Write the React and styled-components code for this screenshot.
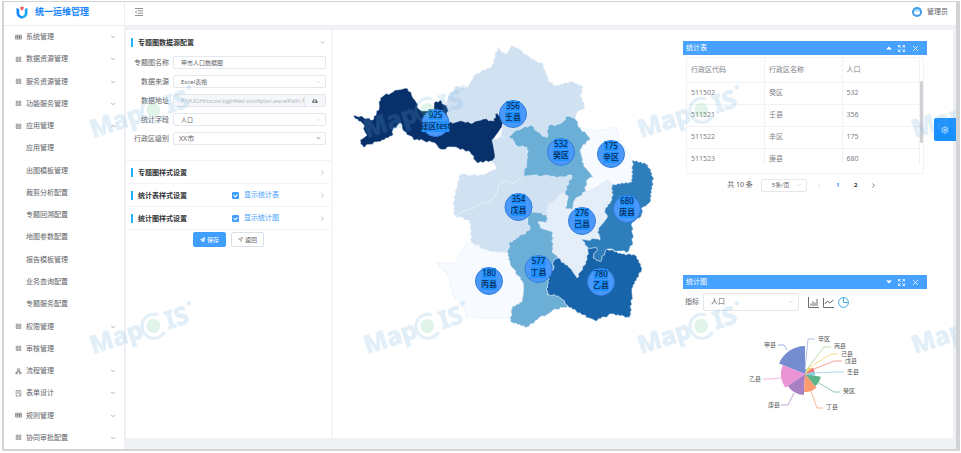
import React from "react";
import styled, { createGlobalStyle, css } from "styled-components";
import { ChevronDown, ChevronUp, ChevronRight, ChevronLeft, X, Send, Settings } from "lucide-react";
import { FaCloudUploadAlt, FaPaperPlane } from "react-icons/fa";

const GlobalStyle = createGlobalStyle`
  *, *::before, *::after { box-sizing: border-box; }
  body {
    margin: 0;
    background: #fff;
    color: #606266;
    font: 7px/10px "Noto Sans", "Noto Sans CJK SC", sans-serif;
  }
  button, input, select { font: inherit; color: inherit; margin: 0; }
  svg { display: block; flex: none; }
`;

const Frame = styled.div`
  position: relative;
  display: grid;
  grid-template-columns: 121px minmax(0, 1fr);
  min-height: calc(100vh - 3px);
  margin: 1px 1px 2px 2px;
  border: 1px solid #d4d4d4;
  border-left-width: 2px;
  border-right: 4px solid #d2d3d5;
  border-bottom-width: 2px;
  overflow: hidden;
`;

const Sidebar = styled.aside`
  display: flex;
  flex-direction: column;
  background: #fff;
  border-right: 1px solid #eceef2;
`;

const Brand = styled.div`
  display: flex;
  align-items: center;
  gap: 7px;
  height: 24px;
  padding: 0 12px 3px;
  border-bottom: 1px solid #eceef2;
  color: #1684fc;
  font-size: 9px;
  font-weight: 700;
`;

const Nav = styled.nav`
  flex: 1;
  display: grid;
  grid-auto-rows: 1fr;
`;

const NavItem = styled.button`
  display: flex;
  align-items: center;
  gap: 4px;
  min-height: 16px;
  padding: 0 8px 0 ${(p) => (p.$child ? 22 : 11)}px;
  border: 0;
  background: none;
  text-align: left;
  cursor: pointer;
  span { flex: 1; }
`;

const Page = styled.div`
  display: flex;
  flex-direction: column;
  min-width: 0;
  background: #eff1f5;
`;

const TopBar = styled.header`
  display: flex;
  align-items: center;
  justify-content: space-between;
  height: 23px;
  padding: 0 8px 4px 10px;
  background: #fff;
`;

const IconButton = styled.button`
  display: flex;
  padding: 0;
  border: 0;
  background: none;
  color: ${(p) => p.$color || "inherit"};
  cursor: pointer;
`;

const User = styled.div`
  display: flex;
  align-items: center;
  gap: 5px;
`;

const Workspace = styled.main`
  flex: 1;
  display: grid;
  grid-template-columns: 207px minmax(310px, 1fr) 270px;
  margin: 5px 3px 11px 1px;
  background: #fff;
`;

const Config = styled.form`
  border-right: 2px solid #f5f6f8;
`;

const Section = styled.section`
  display: flex;
  align-items: center;
  height: ${(p) => (p.$open ? 24 : 23)}px;
  margin: 0 2px 0 1px;
  padding: 0 3px 0 4px;
  border-bottom: ${(p) => (p.$open ? 0 : 1)}px solid #f1f2f5;
  color: #909399;
`;

const SectionTitle = styled.h2`
  flex: 1;
  margin: 0;
  padding-left: 5px;
  border-left: 2px solid #22b1fb;
  color: #303133;
  font-size: 7px;
  font-weight: 700;
  line-height: 9px;
`;

const CheckLabel = styled.label`
  display: flex;
  align-items: center;
  gap: 5px;
  width: 87px;
  color: #409eff;
`;

const Check = styled.input`
  appearance: none;
  position: relative;
  width: 7px;
  height: 7px;
  border: 1px solid #409eff;
  border-radius: 1px;
  background: #fff;
  &:checked { background: #409eff; }
  &:checked::after {
    content: "";
    position: absolute;
    left: 1px;
    top: 0;
    width: 3px;
    height: 4px;
    border: solid #fff;
    border-width: 0 1px 1px 0;
    transform: rotate(45deg);
  }
`;

const Fields = styled.div`
  display: grid;
  gap: 6px;
  padding: 2px 5px 15px;
  border-bottom: 1px solid #f1f2f5;
`;

const Field = styled.div`
  display: grid;
  grid-template-columns: 38px minmax(0, 1fr);
  align-items: center;
  gap: 4px;
  height: 13px;
`;

const FieldLabel = styled.label`
  text-align: right;
  white-space: nowrap;
`;

const control = css`
  width: 100%;
  min-width: 0;
  height: ${(p) => p.$height || 13}px;
  padding: 0 7px;
  border: 1px solid #e4e7ed;
  border-radius: 2px;
  background: #fff;
  font-size: ${(p) => p.$size || 6}px;
  line-height: 10px;
  outline: 0;
`;

const TextInput = styled.input`
  ${control}
`;

const SelectBox = styled.div`
  position: relative;
  width: ${(p) => p.$width || "100%"};
  svg {
    position: absolute;
    right: 5px;
    top: calc(50% - 3px);
    color: #c0c4cc;
    pointer-events: none;
  }
`;

const SelectInput = styled.select`
  ${control}
  appearance: none;
  padding-left: ${(p) => p.$indent || 7}px;
`;

const Upload = styled.div`
  display: flex;
  height: 13px;
  border: 1px solid #e4e7ed;
  border-radius: 2px;
  background: #f5f7fa;
`;

const PathInput = styled.input`
  flex: 1;
  min-width: 0;
  padding: 0 0 0 7px;
  border: 0;
  background: none;
  color: #b4b8c0;
  font-family: Lato, "Noto Sans CJK SC", sans-serif;
  font-size: 6px;
`;

const UploadButton = styled.button`
  display: grid;
  place-items: center;
  width: 21px;
  padding: 0;
  border: 0;
  border-left: 1px solid #e4e7ed;
  background: none;
  color: #777a80;
`;

const Actions = styled.div`
  display: flex;
  justify-content: center;
  gap: 5px;
  padding: 2px 0 0;
`;

const Button = styled.button`
  display: flex;
  align-items: center;
  justify-content: center;
  gap: 2px;
  width: 33px;
  height: 15px;
  padding: 0;
  border: 1px solid ${(p) => (p.$primary ? "#409eff" : "#dcdfe6")};
  border-radius: 2px;
  background: ${(p) => (p.$primary ? "#409eff" : "#fff")};
  color: ${(p) => (p.$primary ? "#fff" : "#606266")};
  font-size: 6px;
`;

const MapArea = styled.section`
  display: flex;
  justify-content: center;
  align-items: flex-start;
  padding: 10px 0 0;
`;

const Dock = styled.aside`
  display: flex;
  flex-direction: column;
  justify-content: space-between;
  padding: 11px 26px 12px 0;
`;

const PanelBar = styled.header`
  display: flex;
  align-items: center;
  gap: 6px;
  height: 14px;
  padding: 0 7px 0 3px;
  background: #46a1ff;
  color: #fff;
  h2 { flex: 1; margin: 0; font-size: 7px; font-weight: 400; }
`;

const TableFrame = styled.div`
  position: relative;
  height: 117px;
  margin: 2px 3px 0;
  padding-bottom: 9px;
  border: 1px solid #f0f2f6;
`;

const TableClip = styled.div`
  height: 106px;
  overflow: hidden;
`;

const Thumb = styled.div`
  position: absolute;
  top: 23px;
  right: 0;
  width: 3px;
  height: 62px;
  border-radius: 2px;
  background: #d0d1d4;
`;

const Table = styled.table`
  width: calc(100% - 3px);
  border-collapse: collapse;
  table-layout: fixed;
  th, td {
    height: 22px;
    padding: 0 0 0 4px;
    border-right: 1px solid #f0f2f6;
    border-bottom: 1px solid #f0f2f6;
    color: #7d8087;
    font-weight: 400;
    text-align: left;
  }
  th { height: 24px; }
`;

const Pager = styled.div`
  display: flex;
  align-items: center;
  justify-content: center;
  gap: 8px;
  height: 22px;
  padding-right: 4px;
`;

const PageButton = styled.button`
  display: grid;
  place-items: center;
  width: 10px;
  padding: 0;
  border: 0;
  background: none;
  color: ${(p) => (p.$active ? "#409eff" : p.$muted ? "#c0c4cc" : "#303133")};
  font-size: 6px;
  font-weight: 700;
`;

const ChartTools = styled.div`
  display: flex;
  align-items: center;
  gap: 4px;
  padding: 4px 2px 0;
`;

const ChartTypes = styled.div`
  display: flex;
  gap: 4px;
  margin-left: 5px;
`;

const ChartHolder = styled.div`
  display: flex;
  justify-content: center;
  height: 115px;
  padding-top: 16px;
`;

const SettingsTab = styled.button`
  position: absolute;
  top: 116px;
  right: 0;
  display: grid;
  place-items: center;
  width: 22px;
  height: 23px;
  padding: 0;
  border: 0;
  border-radius: 2px 0 0 2px;
  background: #1890ff;
  color: #fff;
`;

const WatermarkLayer = styled.svg`
  position: absolute;
  inset: 0;
  width: 100%;
  height: 100%;
  pointer-events: none;
`;

const MarkText = styled.text`
  font-family: "Noto Sans", "Liberation Sans", sans-serif;
  font-size: ${(p) => p.$size || 25}px;
  font-weight: 700;
  fill: #63a9d8;
  stroke: #63a9d8;
`;

const MapText = styled.text`
  font-size: 8px;
  font-weight: 500;
  text-anchor: middle;
  fill: #0c2850;
`;

const ChartText = styled.text`
  font-size: 6px;
  fill: #555;
`;

/* ---------- icons ---------- */

const glyphs = {
  table: "M.5 1.5h8v5h-8zM3.2 1.5v5M5.8 1.5v5M.5 3.2h8M.5 4.8h8",
  grid: "M1.5 1.5h2.4v2.2H1.5zM5.1 1.5h2.4v2.2H5.1zM1.5 4.9h2.4v2.2H1.5zM5.1 4.9h2.4v2.2H5.1z",
  flow: "M3 1h3v2.2H3zM4.5 3.2v1.5M2 6V4.7h5V6M1 6h2.4v1.5H1zM5.6 6H8v1.5H5.6z",
  form: "M1.5 .8h6v7h-6zM3 2.6h3M3 4.2h3M5.5 6h2",
};

const Glyph = ({ name }) => (
  <svg width="7" height="7" viewBox="0 0 9 9" fill="none" stroke="#6b6d72" strokeWidth=".8">
    <path d={glyphs[name]} />
  </svg>
);

const Logo = () => (
  <svg width="12" height="13" viewBox="0 0 12 13">
    <path d="M.5 2 3.200 3v4c0 1.700 1.100 2.600 2.800 3.300v2.500C2.500 11.500.5 9.800.5 7Z" fill="#1686fa" />
    <path d="M11.500 2 8.800 3v4c0 1.700-1.100 2.600-2.800 3.300v2.500c3.500-1.300 5.500-3 5.500-5.800Z" fill="#19a8f6" />
    <path d="M6 .4 8 1.400 7.200 3.200 6 4.400 4.800 3.200 4 1.400Z" fill="#ee5662" />
  </svg>
);

const Triangle = ({ up, color = "currentColor", size = 6 }) => (
  <svg width={size} height={size} viewBox="0 0 6 6">
    <path d={up ? "M0 4.500 3 1.500 6 4.500Z" : "M0 1.500h6L3 4.500Z"} fill={color} />
  </svg>
);

const Fullscreen = () => (
  <svg width="7" height="7" viewBox="0 0 8 8" fill="none" stroke="currentColor" strokeWidth=".9">
    <path d="M.6 2.800V.6h2.200M.6.6l2.500 2.500M5.200.6h2.200v2.200M7.400.6 4.900 3.100M.6 5.200v2.200h2.200M.6 7.400l2.500-2.500M5.200 7.400h2.200V5.200M7.400 7.400 4.900 4.900" />
  </svg>
);

const BarIcon = () => (
  <svg width="11" height="11" viewBox="0 0 11 11" fill="none" stroke="#6c6e73">
    <path d="M.5 0v10.500H11M3 9V6.500M5 9V4.500M7 9V5.500M9 9V2" />
  </svg>
);
const LineIcon = () => (
  <svg width="11" height="11" viewBox="0 0 11 11" fill="none" stroke="#6c6e73">
    <path d="M.5 1v9.500H11M2 7l2.500-3 2 2L10.500 3" />
  </svg>
);
const PieIcon = () => (
  <svg width="11" height="11" viewBox="0 0 11 11" fill="none" stroke="currentColor">
    <circle cx="5.500" cy="5.500" r="4.900" />
    <path d="M5.500.6v4.900h4.900" />
  </svg>
);

/* ---------- sidebar ---------- */

const menu = [
  ["系统管理", "table", "down"],
  ["数据资源管理", "grid", "down"],
  ["服务资源管理", "grid", "down"],
  ["功能服务管理", "grid", "down"],
  ["应用管理", "grid", "up"],
  ["应用管理"],
  ["出图模板管理"],
  ["裁剪分析配置"],
  ["专题回溯配置"],
  ["地图参数配置"],
  ["报告模板管理"],
  ["业务查询配置"],
  ["专题服务配置"],
  ["权限管理", "grid", "down"],
  ["审核管理", "grid"],
  ["流程管理", "flow", "down"],
  ["表单设计", "form", "down"],
  ["规则管理", "table", "down"],
  ["协同审批配置", "grid", "down"],
];

/* ---------- map ---------- */

const regions = [
  { fill: "#d0e1f2", at: [513, 114], value: 356, name: "壬县",
    pts: "449,123 447,107 449,96 457,86 468,88 473,78 482,70 492,67 495,55 499,47 502,53 507,54 512,45 520,50 530,58 542,63 545,70 548,80 555,86 572,82 583,87 580,95 585,107 577,113 576,120 567,116 562,123 548,126 547,138 538,132 531,125 518,130 509,136 502,137 503,115 495,114 494,121 483,119 473,123 462,121" },
  { fill: "#d0e1f2", at: [518.5, 207], value: 354, name: "戊县",
    pts: "457,188 460,175 483,175 497,168 492,161 495,155 492,140 502,137 509,136 517,146 527,147 528,157 523,177 545,175 558,177 572,175 570,180 565,193 557,197 548,205 547,215 533,212 527,215 530,230 510,242 507,252 489,251 477,245 472,243 470,220 455,216 453,203" },
  { fill: "#08306b", at: [435.5, 123], value: 925, name: "辖区test",
    pts: "353,116 363,117 373,120 379,108 380,98 395,90 408,89 413,98 420,110 435,110 434,103 440,100 447,107 449,123 462,121 473,123 483,119 494,121 495,114 503,115 502,127 492,140 495,155 492,161 477,163 470,152 455,147 440,149 435,143 413,139 403,130 400,123 393,130 392,136 382,140 363,147 360,140 367,135 362,123" },
  { fill: "#f7fbff", at: [611, 154], value: 175, name: "辛区",
    pts: "576,120 580,128 597,131 617,127 618,137 633,160 632,182 612,185 608,180 603,183 597,188 585,192 587,180 593,177 582,162 580,150 590,138 580,128" },
  { fill: "#f7fbff", at: [489, 281], value: 180, name: "丙县",
    pts: "437,263 455,263 467,243 477,245 489,251 507,252 510,263 523,283 522,302 512,308 510,318 467,317 463,307 452,293 450,277" },
  { fill: "#6baed6", at: [561, 152], value: 532, name: "癸区",
    pts: "509,136 518,130 531,125 538,132 547,138 548,126 562,123 567,116 576,120 580,128 590,138 580,150 582,162 593,177 587,180 585,192 575,200 572,210 565,208 568,198 565,193 570,180 572,175 558,177 545,175 523,177 528,157 527,147 517,146" },
  { fill: "#e3eef9", at: [582, 221], value: 276, name: "己县",
    pts: "585,192 597,188 603,183 608,180 612,185 612,200 605,210 607,218 597,232 600,240 582,239 588,248 587,260 577,278 570,268 558,258 552,252 553,233 540,227 538,222 547,222 547,215 548,205 557,197 565,193 568,198 565,208 572,210 575,200" },
  { fill: "#2e7ebc", at: [627, 209], value: 680, name: "庚县",
    pts: "612,185 632,182 633,160 648,165 653,177 651,200 643,207 640,218 632,223 633,243 628,252 607,249 600,262 593,258 597,248 588,248 582,239 600,240 597,232 607,218 605,210 612,200" },
  { fill: "#1864aa", at: [601, 282], value: 780, name: "乙县",
    pts: "588,248 597,248 593,258 600,262 607,249 622,254 635,255 642,268 633,287 630,318 612,314 595,321 583,315 568,306 558,296 547,295 548,277 553,270 553,262 558,258 570,268 577,278 587,260" },
  { fill: "#6baed6", at: [538.5, 269], value: 577, name: "丁县",
    pts: "527,215 533,212 547,215 547,222 538,222 540,227 553,233 552,252 558,258 553,262 553,270 548,277 547,295 558,296 568,306 553,310 537,320 527,327 510,322 512,308 522,302 523,283 510,263 507,252 510,242 530,230" },
];

// Subdivides an edge into a coastline; both neighbours of an edge get the same points.
function roughEdge(a, b) {
  const flip = a[0] > b[0] || (a[0] === b[0] && a[1] > b[1]);
  const [p, q] = flip ? [b, a] : [a, b];
  const len = Math.hypot(q[0] - p[0], q[1] - p[1]);
  const n = Math.max(1, Math.round(len / 2));
  const out = [];
  for (let i = 1; i < n; i++) {
    const t = i / n;
    const s = Math.sin(p[0] * 12.9 + p[1] * 78.2 + q[0] * 3.7 + q[1] * 9.1 + i * 37.7) * 43758.5;
    const d = (s - Math.floor(s) - 0.5) * 2.2;
    out.push([
      p[0] + (q[0] - p[0]) * t - ((q[1] - p[1]) / len) * d,
      p[1] + (q[1] - p[1]) * t + ((q[0] - p[0]) / len) * d,
    ]);
  }
  return flip ? out.reverse() : out;
}

function outline(pts) {
  const v = pts.split(" ").map((s) => s.split(",").map(Number));
  return v
    .flatMap((p, i) => [p, ...roughEdge(p, v[(i + 1) % v.length])])
    .map((p) => p.map((c) => c.toFixed(1)).join(","))
    .join(" ");
}

const RegionMap = () => (
  <svg width="310" height="292" viewBox="353 40 310 292" role="img" aria-label="人口数据图">
    {regions.map((r) => (
      <polygon key={r.name} points={outline(r.pts)} fill={r.fill} stroke="#d9e7f5" strokeWidth=".5" strokeLinejoin="round" />
    ))}
    <path d="M455 216 463 211 474 208 482 203 490 202 497 193 499 184 507 180 512 184 523 177" fill="none" stroke="#eef5fc" strokeWidth=".7" />
    {regions.map(({ at: [x, y], value, name }) => {
      const w = name.length > 2 ? 28 : 15;
      return (
        <g key={name}>
          <circle cx={x} cy={y} r="13.500" fill="#4b98fb" stroke="#2f7ddb" />
          <rect x={x - 7} y={y - 13} width="14" height="10" fill="#1e90ff" />
          <rect x={x - w / 2} y={y - 2} width={w} height="11" fill="#1e90ff" />
          <MapText x={x} y={y - 5}>{value}</MapText>
          <MapText x={x} y={y + 6}>{name}</MapText>
        </g>
      );
    })}
  </svg>
);

/* ---------- rose chart ---------- */

const slices = [
  { name: "甲县", color: "#758dd0", from: 202, to: 270, r: 28, line: "787,350 784,345 778,345", tx: 764, ty: 347 },
  { name: "乙县", color: "#ea93d5", from: 145, to: 202, r: 24, line: "781,378 772,379 763,379", tx: 749, ty: 381 },
  { name: "庚县", color: "#a97fc4", from: 93, to: 145, r: 21, line: "794,393 788,405 781,405", tx: 768, ty: 407 },
  { name: "丁县", color: "#fc9a70", from: 50, to: 93, r: 18, line: "811,391 817,408 823,408", tx: 826, ty: 409 },
  { name: "癸区", color: "#5cb489", from: 10, to: 50, r: 16, line: "819,383 834,392 840,392", tx: 843, ty: 393 },
  { name: "壬县", color: "#86cae6", from: -14, to: 10, r: 10, line: "815,373 835,372 844,372", tx: 847, ty: 374 },
  { name: "戊县", color: "#ee7878", from: -40, to: -14, r: 10, line: "814,369 834,361 842,361", tx: 845, ty: 363 },
  { name: "己县", color: "#f8ca62", from: -62, to: -40, r: 8, line: "810,367 831,354 838,354", tx: 841, ty: 356 },
  { name: "丙县", color: "#9dd087", from: -78, to: -62, r: 5, line: "807,369 824,347 831,347", tx: 834, ty: 348 },
  { name: "辛区", color: "#8fa3dc", from: -90, to: -78, r: 5, line: "805,369 808,339 815,339", tx: 818, ty: 341 },
];

const polar = (deg, r) => {
  const a = (deg * Math.PI) / 180;
  return `${(805 + r * Math.cos(a)).toFixed(2)} ${(374 + r * Math.sin(a)).toFixed(2)}`;
};

const RoseChart = () => (
  <svg width="126" height="90" viewBox="742 327 126 90" role="img" aria-label="统计图">
    {slices.map((s) => (
      <g key={s.name}>
        <path d={`M805 374L${polar(s.from, s.r)}A${s.r} ${s.r} 0 0 1 ${polar(s.to, s.r)}Z`} fill={s.color} />
        <polyline points={s.line} fill="none" stroke={s.color} strokeWidth=".7" />
        <ChartText x={s.tx} y={s.ty}>{s.name}</ChartText>
      </g>
    ))}
  </svg>
);

/* ---------- shared parts ---------- */

const SelectField = ({ id, value, width, indent, size, height, solid, label }) => (
  <SelectBox $width={width}>
    <SelectInput id={id} aria-label={label} defaultValue={value} $indent={indent} $size={size} $height={height}>
      <option>{value}</option>
    </SelectInput>
    {solid ? <Triangle size={5} /> : <ChevronDown size={6} />}
  </SelectBox>
);

const PanelHeader = ({ title, up }) => (
  <PanelBar>
    <h2>{title}</h2>
    <IconButton type="button" aria-label="折叠"><Triangle up={up} /></IconButton>
    <IconButton type="button" aria-label="全屏"><Fullscreen /></IconButton>
    <IconButton type="button" aria-label="关闭"><X size={9} /></IconButton>
  </PanelBar>
);

const Toggle = ({ children }) => (
  <CheckLabel>
    <Check type="checkbox" defaultChecked />
    {children}
  </CheckLabel>
);

const Watermark = () => (
  <WatermarkLayer aria-hidden="true">
    <defs>
      <pattern id="mark" x="80" y="70" width="274" height="216" patternUnits="userSpaceOnUse">
        <g transform="translate(9 66) rotate(-18)" opacity=".19">
          <MarkText x="0" y="0">Map</MarkText>
          <MarkText x="79" y="0">IS</MarkText>
          <MarkText x="105" y="-17" $size={5}>®</MarkText>
          <circle cx="66" cy="-8" r="7" fill="#5fc488" />
          <path d="M74-17A12 12 0 1 0 75 1" fill="none" stroke="#63a9d8" strokeWidth="3" />
        </g>
      </pattern>
    </defs>
    <rect width="100%" height="100%" fill="url(#mark)" />
  </WatermarkLayer>
);

const rows = [
  ["511502", "癸区", "532"],
  ["511521", "壬县", "356"],
  ["511522", "辛区", "175"],
  ["511523", "庚县", "680"],
];

export default function App() {
  return (
    <>
      <GlobalStyle />
      <Frame>
        <Sidebar>
          <Brand><Logo />统一运维管理</Brand>
          <Nav>
            {menu.map(([name, icon, arrow], i) => (
              <NavItem key={i} type="button" $child={!icon}>
                {icon && <Glyph name={icon} />}
                <span>{name}</span>
                {arrow === "down" && <ChevronDown size={6} />}
                {arrow === "up" && <ChevronUp size={6} />}
              </NavItem>
            ))}
          </Nav>
        </Sidebar>

        <Page>
          <TopBar>
            <IconButton type="button" aria-label="收起菜单">
              <svg width="8" height="8" viewBox="0 0 8 8" fill="none" stroke="#777">
                <path d="M0 .5h8M3 2.800h5M3 5.200h5M0 7.500h8M2 2.500.5 4 2 5.500" strokeWidth=".8" />
              </svg>
            </IconButton>
            <User>
              <svg width="10" height="10" viewBox="0 0 10 10">
                <circle cx="5" cy="5" r="5" fill="#3f9fea" />
                <ellipse cx="5" cy="5.500" rx="3" ry="2.300" fill="#fff" />
                <path d="M2.200 4.500a2.800 2.400 0 0 1 5.600 0Z" fill="#a9dcfb" />
              </svg>
              管理员
            </User>
          </TopBar>

          <Workspace>
            <Config onSubmit={(e) => e.preventDefault()}>
              <Section $open>
                <SectionTitle>专题图数据源配置</SectionTitle>
                <ChevronDown size={7} />
              </Section>
              <Fields>
                <Field>
                  <FieldLabel htmlFor="name">专题图名称</FieldLabel>
                  <TextInput id="name" defaultValue="甲市人口数据图" />
                </Field>
                <Field>
                  <FieldLabel htmlFor="source">数据来源</FieldLabel>
                  <SelectField id="source" value="Excel表格" />
                </Field>
                <Field>
                  <FieldLabel htmlFor="path">数据地址</FieldLabel>
                  <Upload>
                    <PathInput id="path" disabled defaultValue="F:\KJGHNacos\kjghfiles\multiplan\excelPath\专" />
                    <UploadButton type="button" aria-label="上传"><FaCloudUploadAlt size={6} /></UploadButton>
                  </Upload>
                </Field>
                <Field>
                  <FieldLabel htmlFor="field">统计字段</FieldLabel>
                  <SelectField id="field" value="人口" />
                </Field>
                <Field>
                  <FieldLabel htmlFor="level">行政区级别</FieldLabel>
                  <SelectField id="level" value="XX市" size={7} indent={5} solid />
                </Field>
              </Fields>
              <Section>
                <SectionTitle>专题图样式设置</SectionTitle>
                <ChevronRight size={7} />
              </Section>
              <Section>
                <SectionTitle>统计表样式设置</SectionTitle>
                <Toggle>显示统计表</Toggle>
                <ChevronRight size={7} />
              </Section>
              <Section>
                <SectionTitle>统计图样式设置</SectionTitle>
                <Toggle>显示统计图</Toggle>
                <ChevronRight size={7} />
              </Section>
              <Actions>
                <Button type="submit" $primary><FaPaperPlane size={5} />保存</Button>
                <Button type="button"><Send size={5} />返回</Button>
              </Actions>
            </Config>

            <MapArea><RegionMap /></MapArea>

            <Dock>
              <section>
                <PanelHeader title="统计表" up />
                <TableFrame>
                  <TableClip>
                    <Table>
                      <thead>
                        <tr><th>行政区代码</th><th>行政区名称</th><th>人口</th></tr>
                      </thead>
                      <tbody>
                        {rows.map((r) => (
                          <tr key={r[0]}>{r.map((c) => <td key={c}>{c}</td>)}</tr>
                        ))}
                      </tbody>
                    </Table>
                  </TableClip>
                  <Thumb />
                </TableFrame>
                <Pager>
                  <span>共 10 条</span>
                  <SelectField label="每页条数" value="5条/页" width="46px" indent={10} />
                  <PageButton type="button" aria-label="上一页" $muted><ChevronLeft size={7} /></PageButton>
                  <PageButton type="button" $active>1</PageButton>
                  <PageButton type="button">2</PageButton>
                  <PageButton type="button" aria-label="下一页"><ChevronRight size={7} /></PageButton>
                </Pager>
              </section>

              <section>
                <PanelHeader title="统计图" />
                <ChartTools>
                  <label htmlFor="metric">指标</label>
                  <SelectField id="metric" value="人口" width="96px" size={7} height={18} />
                  <ChartTypes>
                    <IconButton type="button" aria-label="柱状图"><BarIcon /></IconButton>
                    <IconButton type="button" aria-label="折线图"><LineIcon /></IconButton>
                    <IconButton type="button" aria-label="饼图" $color="#41a9e0"><PieIcon /></IconButton>
                  </ChartTypes>
                </ChartTools>
                <ChartHolder><RoseChart /></ChartHolder>
              </section>
            </Dock>
          </Workspace>
        </Page>

        <SettingsTab type="button" aria-label="设置"><Settings size={8} /></SettingsTab>
        <Watermark />
      </Frame>
    </>
  );
}
